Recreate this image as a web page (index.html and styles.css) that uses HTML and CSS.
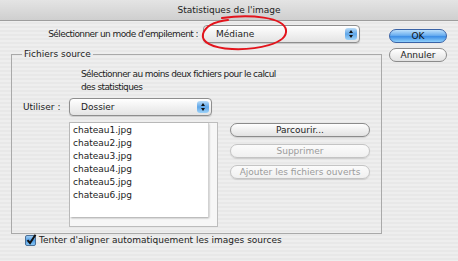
FILE: index.html
```html
<!DOCTYPE html>
<html lang="fr">
<head>
  <meta charset="UTF-8" />
  <title>Statistiques de l'image</title>
  <link rel="stylesheet" href="styles.css">
</head>
<body>
  <div class="titlebar">Statistiques de l'image</div>
  <div class="dialog">
    <div class="main">
      <div class="mode-row">
        <span class="mode-label">Sélectionner un mode d'empilement :</span>
        <div class="popup popup-mode">
          <span>Médiane</span>
          <span class="stepper"><i class="up"></i><i class="down"></i></span>
        </div>
      </div>
      <fieldset class="group">
        <legend>Fichiers source</legend>
        <p class="hint">Sélectionner au moins deux fichiers pour le calcul<br>des statistiques</p>
        <div class="use-row">
          <span class="use-label">Utiliser :</span>
          <div class="popup popup-use">
            <span>Dossier</span>
            <span class="stepper"><i class="up"></i><i class="down"></i></span>
          </div>
        </div>
        <div class="files">
          <div class="listframe">
            <ul class="list">
              <li>chateau1.jpg</li>
              <li>chateau2.jpg</li>
              <li>chateau3.jpg</li>
              <li>chateau4.jpg</li>
              <li>chateau5.jpg</li>
              <li>chateau6.jpg</li>
            </ul>
            <div class="track-v"></div>
            <div class="track-h"></div>
          </div>
          <div class="actions">
            <button class="pill">Parcourir...</button>
            <button class="pill" disabled>Supprimer</button>
            <button class="pill" disabled>Ajouter les fichiers ouverts</button>
          </div>
        </div>
        <label class="check-row">
          <svg class="check" width="12" height="12" viewBox="0 0 12 12">
            <defs>
              <linearGradient id="cb" x1="0" y1="0" x2="0" y2="1">
                <stop offset="0" stop-color="#a9d3f5"/>
                <stop offset="0.5" stop-color="#4f9be3"/>
                <stop offset="1" stop-color="#8ccaf6"/>
              </linearGradient>
            </defs>
            <rect x="0.5" y="1.5" width="10" height="10" rx="1.5" fill="url(#cb)" stroke="#4a6f96"/>
            <path d="M2.5 6.2 L5 9 L10.5 0.8" fill="none" stroke="#111" stroke-width="2"/>
          </svg>
          <span>Tenter d'aligner automatiquement les images sources</span>
        </label>
      </fieldset>
    </div>
    <div class="side">
      <button class="aqua ok">OK</button>
      <button class="aqua cancel">Annuler</button>
    </div>
  </div>
  <svg class="circle" width="458" height="261" viewBox="0 0 458 261">
    <path d="M222 18 C250 14, 284 17, 286 30 C288 44, 256 50, 232 49 C212 48, 201 42, 203 34 C205 27, 211 22, 228 20" fill="none" stroke="#e3141c" stroke-width="2" stroke-linecap="round"/>
  </svg>
</body>
</html>
```

FILE: styles.css
```css
body {
  margin: 0;
  width: 458px;
  height: 261px;
  overflow: hidden;
  position: relative;
  font-family: "DejaVu Sans", sans-serif;
  font-size: 9px;
  color: #1c1c1c;
  background: repeating-linear-gradient(to bottom, #eeeeee 0, #eeeeee 2px, #e8e8e8 2px, #e8e8e8 4px);
}
.titlebar {
  height: 20px;
  line-height: 20px;
  text-align: center;
  color: #222;
  background: linear-gradient(#e4e4e4, #cfcfcf);
  border-bottom: 1px solid #9d9d9d;
}
.dialog {
  display: flex;
  padding: 4px 0 0 11px;
}
.main {
  width: 371px;
}
.mode-row {
  display: flex;
  align-items: center;
  justify-content: flex-end;
  gap: 5px;
  height: 18px;
  padding-right: 22px;
}
.mode-label {
  letter-spacing: -0.58px;
}
.popup {
  position: relative;
  display: flex;
  align-items: center;
  border: 1px solid #8e8e8e;
  border-radius: 4px;
  background: linear-gradient(#ffffff, #f1f1f1 50%, #e4e4e4);
  box-shadow: 0 1px 1px rgba(0,0,0,0.15);
  box-sizing: border-box;
  height: 18px;
  padding-left: 11px;
}
.popup-mode {
  width: 157px;
  padding-left: 12px;
}
.popup-use {
  width: 143px;
}
.stepper {
  position: absolute;
  right: 2px;
  top: 2px;
  bottom: 2px;
  width: 12px;
  border-radius: 3px;
  background: linear-gradient(#b9dcf8, #5fa6e8 50%, #9dd2f8);
  display: flex;
  flex-direction: column;
  align-items: center;
  justify-content: center;
  gap: 2px;
}
.stepper i {
  width: 0;
  height: 0;
  border-left: 2px solid transparent;
  border-right: 2px solid transparent;
}
.stepper .up { border-bottom: 3px solid #111; }
.stepper .down { border-top: 3px solid #111; }
.group {
  margin: 5px 0 0 0;
  padding: 0 0 4px 0;
  border: 1px solid #a9a9a9;
  height: 186px;
  box-sizing: border-box;
}
.group legend {
  margin-left: 10px;
  padding: 0 2px;
  line-height: 13px;
}
.hint {
  margin: 7px 0 0 69px;
  line-height: 13px;
  letter-spacing: -0.6px;
}
.use-row {
  display: flex;
  align-items: center;
  margin-top: 4px;
}
.use-label {
  width: 46px;
  padding-left: 11px;
}
.files {
  display: flex;
  margin: 6px 0 0 57px;
  gap: 12px;
}
.listframe {
  display: grid;
  grid-template-columns: 138px 9px;
  grid-template-rows: 94px 9px;
  border: 1px solid #bdbdbd;
  background: #f7f7f7;
}
.list {
  margin: 0;
  padding: 1px 0 0 3px;
  list-style: none;
  background: #fff;
  box-shadow: 1px 1px 2px rgba(0,0,0,0.35);
  line-height: 13px;
}
.track-v {
  border-left: 1px solid #d2d2d2;
}
.actions {
  display: flex;
  flex-direction: column;
  gap: 7px;
  padding-top: 1px;
}
.pill {
  width: 140px;
  height: 14px;
  padding: 0;
  font: inherit;
  color: #1c1c1c;
  border: 1px solid #8b8b8b;
  border-radius: 7px;
  background: linear-gradient(#ffffff, #f0f0f0 50%, #e2e2e2);
  box-shadow: 0 1px 1px rgba(0,0,0,0.12);
}
.pill:disabled {
  color: #9b9b9b;
  border-color: #c4c4c4;
  background: linear-gradient(#fbfbfb, #f0f0f0);
}
.check-row {
  display: flex;
  align-items: center;
  gap: 2px;
  margin: 7px 0 0 13px;
}
.side {
  display: flex;
  flex-direction: column;
  gap: 5px;
  margin: 4px 0 0 7px;
}
.aqua {
  width: 58px;
  height: 14px;
  padding: 0;
  font: inherit;
  border-radius: 7px;
}
.ok {
  border: 1px solid #3a63a6;
  background: linear-gradient(#bde0fb, #6aaef0 45%, #3d8ee6 55%, #8fd0fb);
  color: #111;
}
.cancel {
  border: 1px solid #8b8b8b;
  background: linear-gradient(#ffffff, #f0f0f0 50%, #e2e2e2);
  color: #1c1c1c;
}
.circle {
  position: absolute;
  left: 0;
  top: 0;
  pointer-events: none;
}
```
